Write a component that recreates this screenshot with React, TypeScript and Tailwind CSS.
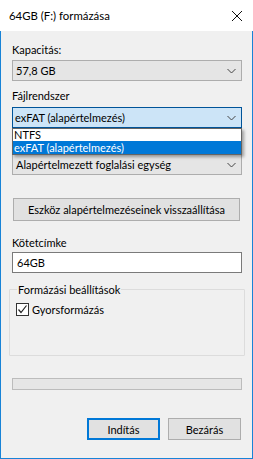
import React from "react";

const font = { fontFamily: 'Lato, "Noto Sans", sans-serif' };

function Chevron() {
  return (
    <svg width="9" height="5" viewBox="0 0 9 5" className="absolute right-[5px] top-1/2 -translate-y-1/2">
      <path d="M0.5 0.5 L4.5 4.5 L8.5 0.5" fill="none" stroke="#444" strokeWidth="1" />
    </svg>
  );
}

export default function App() {
  return (
    <div className="w-[253px] h-[459px] flex flex-col text-[11px] leading-[15px] text-black whitespace-nowrap" style={font}>
      <div className="h-[31px] bg-white flex items-center justify-between pl-[9px] pr-[11px]">
        <span className="text-[11.4px]">64GB (F:) formázása</span>
        <svg width="10" height="10" viewBox="0 0 10 10">
          <path d="M0 0 L10 10 M10 0 L0 10" stroke="#111" strokeWidth="1" />
        </svg>
      </div>
      <div className="flex-1 bg-[#f0f0f0] border-l border-r border-b border-[#1883d7] flex flex-col pl-[11px] pr-[10px] pt-[11px]">
        <div>Kapacitás:</div>
        <div className="relative mt-[3px] h-[21px] border border-[#adadad] bg-[#e5e5e5] flex items-center pl-[3px]">
          57,8 GB
          <Chevron />
        </div>
        <div className="mt-[7px]">Fájlrendszer</div>
        <div className="relative z-10 mt-[4px] h-[21px] border border-[#005499] bg-[#cce4f7] flex items-center pl-[2px]">
          exFAT (alapértelmezés)
          <Chevron />
          <div className="absolute left-[-1px] right-[-1px] top-[20px] z-10 border border-[#646464] bg-white shadow-[2px_2px_3px_rgba(0,0,0,0.35)] flex flex-col">
            <div className="h-[12px] leading-[12px] pl-[1px] bg-white">NTFS</div>
            <div className="h-[13px] leading-[13px] pl-[1px] bg-[#0078d7] text-white">exFAT (alapértelmezés)</div>
          </div>
        </div>
        <div className="mt-[7px] h-[15px]" />
        <div className="relative mt-[4px] h-[21px] border border-[#adadad] bg-[#e5e5e5] flex items-center pl-[3px]">
          Alapértelmezett foglalási egység
          <Chevron />
        </div>
        <div className="mt-[23px] ml-[1px] mr-[2px] h-[23px] border border-[#adadad] bg-[#e1e1e1] flex items-center justify-center">
          Eszköz alapértelmezéseinek visszaállítása
        </div>
        <div className="mt-[14px]">Kötetcímke</div>
        <div className="mt-[2px] h-[21px] border border-[#7a7a7a] bg-white flex items-center pl-[4px]">64GB</div>
        <div className="relative mt-[16px] ml-[-3px] mr-[-3px] h-[67px] border border-[#dcdcdc] rounded-[1px]">
          <div className="absolute left-[7px] top-[-8px] bg-[#f0f0f0] px-[1px]">Formázási beállítások</div>
          <div className="flex items-center mt-[12px] ml-[6px]">
            <div className="w-[13px] h-[13px] border border-[#333] bg-white flex items-center justify-center">
              <svg width="11" height="11" viewBox="0 0 11 11">
                <path d="M1.5 5.5 L4 8.5 L9.5 1.5" fill="none" stroke="#222" strokeWidth="1.2" />
              </svg>
            </div>
            <span className="ml-[3px]">Gyorsformázás</span>
          </div>
        </div>
        <div className="mt-[22px] h-[12px] border border-[#bcbcbc] bg-[#e6e6e6]" />
        <div className="mt-[28px] flex justify-end gap-[8px] mr-[1px]">
          <div className="w-[73px] h-[22px] border-2 border-[#0078d7] bg-[#e1e1e1] flex items-center justify-center">Indítás</div>
          <div className="w-[73px] h-[22px] border border-[#adadad] bg-[#e1e1e1] flex items-center justify-center">Bezárás</div>
        </div>
      </div>
    </div>
  );
}
